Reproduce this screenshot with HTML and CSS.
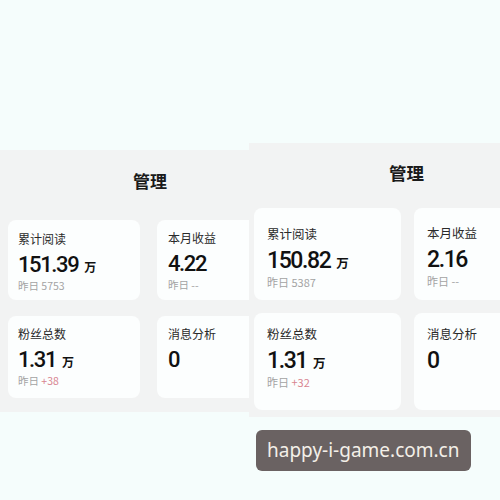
FILE: index.html
```html
<!DOCTYPE html>
<html lang="zh-CN">
<head>
<meta charset="utf-8">
<title>管理</title>
<link rel="stylesheet" href="styles.css">
</head>
<body>
<div class="page">
  <div class="top"></div>
  <div class="panels">
    <section class="panel panel-left">
      <h2 class="title">管理</h2>
      <div class="grid">
        <div class="card">
          <div class="label">累计阅读</div>
          <div class="value"><span class="num">151.39</span><span class="unit">万</span></div>
          <div class="sub">昨日 5753</div>
        </div>
        <div class="card card-b">
          <div class="label">本月收益</div>
          <div class="value"><span class="num">4.22</span></div>
          <div class="sub">昨日 --</div>
        </div>
        <div class="card card-row2">
          <div class="label">粉丝总数</div>
          <div class="value"><span class="num">1.31</span><span class="unit">万</span></div>
          <div class="sub">昨日 <span class="up">+38</span></div>
        </div>
        <div class="card card-b card-row2">
          <div class="label">消息分析</div>
          <div class="value"><span class="num">0</span></div>
        </div>
      </div>
    </section>
    <section class="panel panel-right">
      <h2 class="title">管理</h2>
      <div class="grid">
        <div class="card">
          <div class="label">累计阅读</div>
          <div class="value"><span class="num">150.82</span><span class="unit">万</span></div>
          <div class="sub">昨日 5387</div>
        </div>
        <div class="card card-b">
          <div class="label">本月收益</div>
          <div class="value"><span class="num">2.16</span></div>
          <div class="sub">昨日 --</div>
        </div>
        <div class="card card-row2">
          <div class="label">粉丝总数</div>
          <div class="value"><span class="num">1.31</span><span class="unit">万</span></div>
          <div class="sub">昨日 <span class="up">+32</span></div>
        </div>
        <div class="card card-b card-row2">
          <div class="label">消息分析</div>
          <div class="value"><span class="num">0</span></div>
        </div>
      </div>
    </section>
  </div>
  <div class="watermark">happy-i-game.com.cn</div>
</div>
</body>
</html>
```
FILE: styles.css
```css
* { box-sizing: border-box; }
html, body { margin: 0; padding: 0; }
body {
  width: 500px;
  height: 500px;
  overflow: hidden;
  background: #f5fdfc;
  font-family: "Noto Sans CJK SC", "Noto Sans", sans-serif;
  color: #1b1b1b;
}
.page { position: relative; width: 500px; height: 500px; }
.top { height: 143px; }
.panels { display: flex; align-items: flex-start; }
.panel {
  background: #f2f3f3;
  overflow: hidden;
}
.panel-left { width: 249px; height: 262px; margin-top: 7px; }
.panel-right { width: 251px; height: 274px; }

.title {
  margin: 0;
  font-weight: 700;
  color: #1a1a1a;
}
.panel-left .title { padding: 22px 0 0 133px; font-size: 17px; line-height: 18px; margin-bottom: 30px; }
.panel-right .title { padding: 20px 0 0 140px; font-size: 17.5px; line-height: 20px; margin-bottom: 25px; }

.grid { display: grid; }
.panel-left .grid {
  padding-left: 8px;
  grid-template-columns: 132px 100px;
  grid-template-rows: 80px 82px;
  column-gap: 17px;
  row-gap: 16px;
}
.panel-right .grid {
  padding-left: 5px;
  grid-template-columns: 147px 100px;
  grid-template-rows: 92px 97px;
  column-gap: 13px;
  row-gap: 13px;
}
.card {
  background: #fcfefe;
  border-radius: 8px;
}
.panel-left .card { padding: 11px 10px; }
.panel-left .card-b { padding: 10px 11px; }
.panel-left .card-row2 { padding-top: 10px; }
.panel-right .card { padding: 18px 13px; }
.panel-right .card-b { padding: 17px 13px; }
.panel-right .card-row2 { padding-top: 13px; }

.label { color: #2a2a2a; }
.panel-left .label { font-size: 12px; line-height: 16px; }
.panel-right .label { font-size: 12.5px; line-height: 16px; }

.value { display: flex; align-items: baseline; white-space: nowrap; }
.num {
  font-family: Roboto, "Liberation Sans", sans-serif;
  font-weight: 500;
  color: #111;
}
.unit { font-weight: 700; margin-left: 6px; color: #111; }
.panel-left .value { margin-top: 5px; }
.panel-left .num { font-size: 22px; line-height: 26px; letter-spacing: -1.4px; }
.panel-left .unit { font-size: 12px; }
.panel-right .value { margin-top: 5px; }
.panel-right .num { font-size: 23px; line-height: 27px; letter-spacing: -1.4px; }
.panel-right .unit { font-size: 12.5px; }

.sub { color: #a3a3a3; }
.panel-left .sub { font-size: 10.5px; line-height: 13px; margin-top: 1px; }
.panel-right .sub { font-size: 11px; line-height: 14px; margin-top: 1px; }
.up { color: #d88590; }

.watermark {
  position: absolute;
  left: 256px;
  top: 430px;
  width: 215px;
  height: 41px;
  border-radius: 6px;
  background: #6a6262;
  color: #f3efe8;
  font-family: "Noto Sans", sans-serif;
  font-size: 19px;
  line-height: 41px;
  padding-left: 11px;
  white-space: nowrap;
}
```
